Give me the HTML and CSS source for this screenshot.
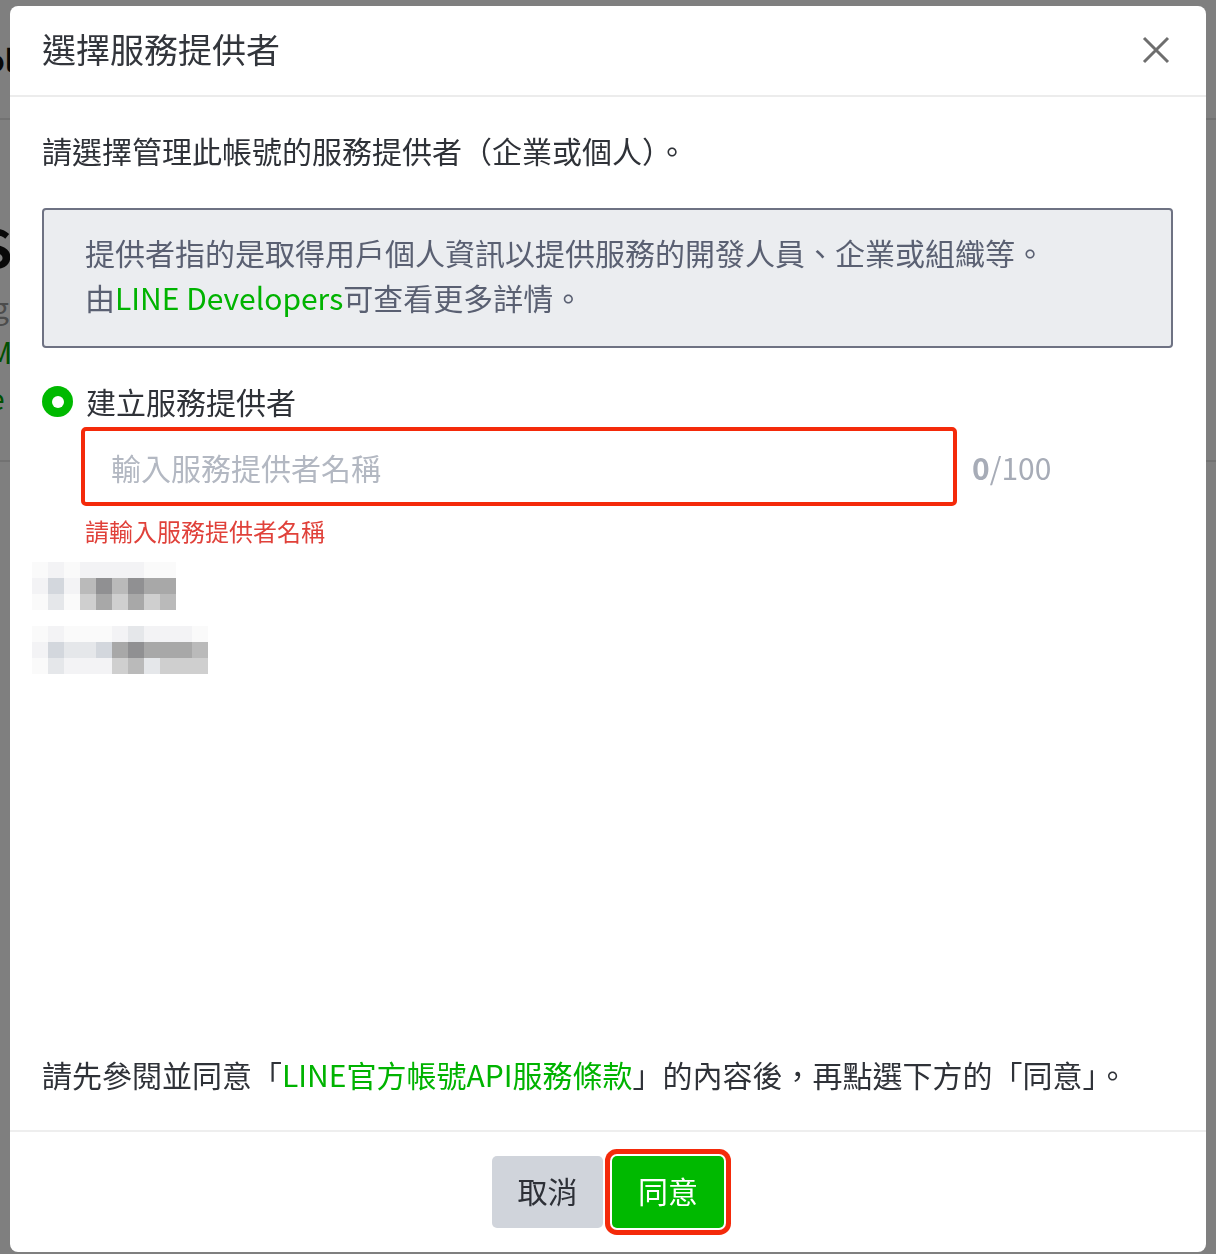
FILE: index.html
```html
<html>
<head>
	<title>選擇服務提供者</title>
	<meta charset='UTF-8'>
	<link rel="stylesheet" href="styles.css">
</head>
<body>
	<div class='page'>
		<div class='page-head'>ol</div>
		<div class='page-title'>S</div>
		<div class='page-sub'>g</div>
		<div class='page-link'>M</div>
		<div class='page-link'>e</div>
		<div class='page-rule'></div>
	</div>
	<div class='backdrop'></div>

	<div class='modal'>
		<div class='modal-head'>
			<span class='modal-title'>選擇服務提供者</span>
			<span class='close'>
				<svg width='28' height='28' viewBox='0 0 28 28'>
					<path d='M2 2 L26 26 M26 2 L2 26' stroke='#6e6e6e' stroke-width='3' fill='none'/>
				</svg>
			</span>
		</div>

		<div class='modal-body'>
			<div class='prompt'>請選擇管理此帳號的服務提供者（企業或個人）。</div>
			<div class='notice'>
				提供者指的是取得用戶個人資訊以提供服務的開發人員、企業或組織等。<br>
				由<span class='link'>LINE Developers</span>可查看更多詳情。
			</div>

			<div class='radio-row'>
				<span class='radio'><span class='radio-dot'></span></span>
				<span class='radio-label'>建立服務提供者</span>
			</div>
			<div class='field-row'>
				<input class='field' type='text' placeholder='輸入服務提供者名稱'>
				<span class='counter'><b>0</b>/100</span>
			</div>
			<div class='error'>請輸入服務提供者名稱</div>

			<!-- blurred existing providers -->
			<div class='mosaic m9'>
				<i class='s0'></i><i class='s1'></i><i class='s0'></i><i class='s1'></i><i class='s1'></i><i class='s1'></i><i class='s1'></i><i class='s0'></i><i class='s0'></i>
				<i class='s1'></i><i class='s3'></i><i class='s1'></i><i class='s5'></i><i class='s7'></i><i class='s5'></i><i class='s7'></i><i class='s6'></i><i class='s6'></i>
				<i class='s0'></i><i class='s2'></i><i class='s0'></i><i class='s4'></i><i class='s6'></i><i class='s4'></i><i class='s6'></i><i class='s4'></i><i class='s5'></i>
			</div>
			<div class='mosaic m11'>
				<i class='s0'></i><i class='s1'></i><i class='s0'></i><i class='s0'></i><i class='s0'></i><i class='s1'></i><i class='s2'></i><i class='s1'></i><i class='s1'></i><i class='s1'></i><i class='s0'></i>
				<i class='s1'></i><i class='s3'></i><i class='s2'></i><i class='s2'></i><i class='s3'></i><i class='s6'></i><i class='s7'></i><i class='s6'></i><i class='s6'></i><i class='s6'></i><i class='s5'></i>
				<i class='s0'></i><i class='s2'></i><i class='s1'></i><i class='s1'></i><i class='s1'></i><i class='s4'></i><i class='s5'></i><i class='s2'></i><i class='s4'></i><i class='s4'></i><i class='s4'></i>
			</div>

			<div class='terms'>請先參閱並同意「<span class='link'>LINE官方帳號API服務條款</span>」的內容後，再點選下方的「同意」。</div>
		</div>

		<div class='modal-foot'>
			<button class='btn btn-cancel'>取消</button>
			<button class='btn btn-ok'>同意</button>
		</div>
	</div>
</body>
</html>
```

FILE: styles.css
```css
body {
	margin: 0;
	width: 1216px;
	height: 1254px;
	overflow: hidden;
	background: #ffffff;
	font-family: "Noto Sans CJK TC", "Noto Sans", sans-serif;
	color: #2f3238;
}

/* page behind the overlay */
.page-head {
	height: 118px;
	border-bottom: 2px solid #e4e4e4;
	font-size: 30px;
	font-weight: bold;
	line-height: 118px;
	margin-left: -14px;
	color: #111;
}
.page-title {
	margin-top: 96px;
	font-size: 52px;
	font-weight: bold;
	line-height: 60px;
	margin-left: -20px;
	color: #111;
}
.page-sub {
	margin-top: 8px;
	font-size: 30px;
	line-height: 44px;
	margin-left: -8px;
	color: #999;
}
.page-link {
	font-size: 30px;
	line-height: 46px;
	margin-left: -12px;
	color: #00a000;
}
.page-rule {
	margin-top: 40px;
	border-top: 2px solid #e4e4e4;
}

.backdrop {
	position: fixed;
	top: 0; left: 0; right: 0; bottom: 0;
	background: rgba(0, 0, 0, 0.5);
}

/* modal */
.modal {
	position: absolute;
	top: 6px;
	left: 10px;
	width: 1196px;
	height: 1246px;
	background: #ffffff;
	border-radius: 8px;
	display: flex;
	flex-direction: column;
	overflow: hidden;
}
.modal-head {
	height: 89px;
	border-bottom: 2px solid #ececec;
	display: flex;
	align-items: center;
	justify-content: space-between;
	padding: 0 36px 0 32px;
}
.modal-title {
	font-size: 34px;
	line-height: 45px;
	margin-top: -4px;
	color: #33363c;
}
.close {
	display: flex;
	width: 28px;
	height: 28px;
	margin-top: -2px;
}

.modal-body {
	flex: 1;
	display: flex;
	flex-direction: column;
	padding: 31px 33px 33px 32px;
}
.prompt {
	font-size: 30px;
	line-height: 45px;
}
.notice {
	margin-top: 35px;
	background: #ebedf0;
	border: 2px solid #6e7283;
	border-radius: 4px;
	padding: 20px 41px 26px 41px;
	font-size: 30px;
	line-height: 45px;
	color: #5a6072;
}
.link {
	color: #00b300;
}

.radio-row {
	margin-top: 31px;
	display: flex;
	align-items: center;
	gap: 13px;
}
.radio {
	width: 31px;
	height: 31px;
	border-radius: 50%;
	background: #00b900;
	display: flex;
	align-items: center;
	justify-content: center;
}
.radio-dot {
	width: 12px;
	height: 12px;
	border-radius: 50%;
	background: #ffffff;
}
.radio-label {
	font-size: 30px;
	line-height: 45px;
}

.field-row {
	margin-top: 3px;
	margin-left: 39px;
	display: flex;
	align-items: center;
	gap: 15px;
}
.field {
	width: 876px;
	height: 79px;
	box-sizing: border-box;
	border: 4px solid #f42a0a;
	border-radius: 5px;
	padding: 0 0 0 26px;
	font-family: "Noto Sans CJK TC", "Noto Sans", sans-serif;
	font-size: 30px;
	outline: none;
}
.field::placeholder {
	color: #b3b8c2;
}
.counter {
	font-size: 30px;
	color: #a7acb7;
}
.error {
	margin-top: 7px;
	margin-left: 43px;
	font-size: 24px;
	line-height: 36px;
	color: #e0413a;
}

.mosaic {
	display: grid;
	grid-auto-rows: 16px;
	margin-left: -10px;
}
.mosaic.m9 {
	margin-top: 13px;
	grid-template-columns: repeat(9, 16px);
}
.mosaic.m11 {
	margin-top: 16px;
	grid-template-columns: repeat(11, 16px);
}
.s0 { background: #fafafa; }
.s1 { background: #f3f3f5; }
.s2 { background: #e5e7ea; }
.s3 { background: #d3d7dd; }
.s4 { background: #cfcfcf; }
.s5 { background: #bababa; }
.s6 { background: #a8a8a8; }
.s7 { background: #909092; }

.terms {
	margin-top: auto;
	font-size: 30px;
	line-height: 45px;
}

.modal-foot {
	border-top: 2px solid #eeeeee;
	padding: 24px 0;
	display: flex;
	justify-content: center;
	gap: 9px;
}
.btn {
	height: 72px;
	border: none;
	border-radius: 5px;
	font-family: "Noto Sans CJK TC", "Noto Sans", sans-serif;
	font-size: 30px;
	padding: 0 0 5px 0;
}
.btn-cancel {
	width: 111px;
	background: #d0d4db;
	color: #2d3037;
}
.btn-ok {
	width: 112px;
	background: #00b900;
	color: #ffffff;
	box-shadow: 0 0 0 2px #ffffff, 0 0 0 7px #f42a0a;
}
```
